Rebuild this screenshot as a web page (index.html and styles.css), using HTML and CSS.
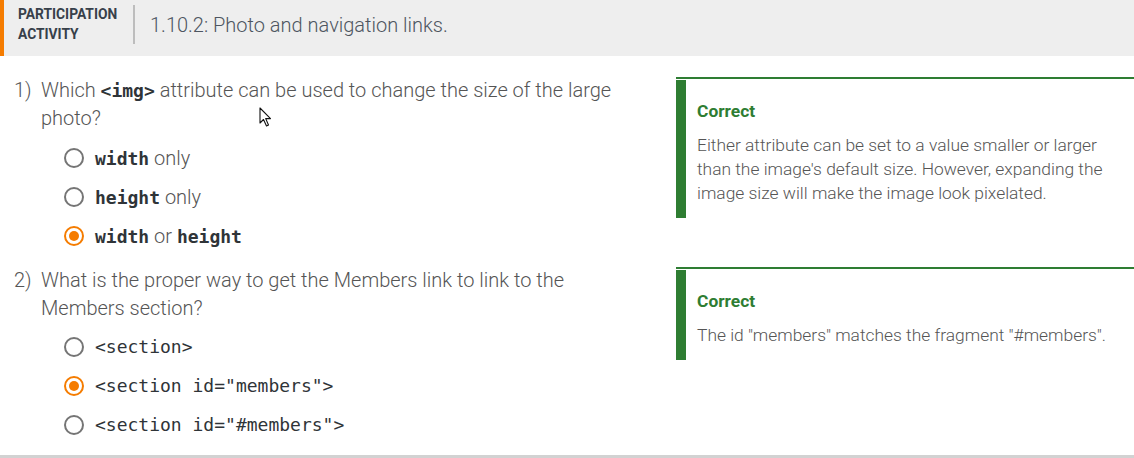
FILE: index.html
```html
<!DOCTYPE html>
<html>
<head>
<meta charset="utf-8">
<link rel="stylesheet" href="styles.css">
</head>
<body>
<div class="activity">
  <header class="head">
    <div class="label">PARTICIPATION<br>ACTIVITY</div>
    <div class="divider"></div>
    <div class="title">1.10.2: Photo and navigation links.</div>
  </header>

  <div class="qa">
    <div class="question first">
      <div class="qline">
        <span class="num">1)</span>
        <span class="qtext">Which <code class="b">&lt;img&gt;</code> attribute can be used to change the size of the large photo?</span>
      </div>
      <ul class="options">
        <li class="opt"><span class="radio"></span><span><code class="b">width</code> only</span></li>
        <li class="opt"><span class="radio"></span><span><code class="b">height</code> only</span></li>
        <li class="opt"><span class="radio on"></span><span><code class="b">width</code> or <code class="b">height</code></span></li>
      </ul>
    </div>
    <div class="feedback">
      <div class="fb-body">
        <div class="fb-title">Correct</div>
        <div class="fb-text">Either attribute can be set to a value smaller or larger than the image's default size. However, expanding the image size will make the image look pixelated.</div>
      </div>
    </div>

    <div class="question second">
      <div class="qline">
        <span class="num">2)</span>
        <span class="qtext">What is the proper way to get the Members link to link to the Members section?</span>
      </div>
      <ul class="options">
        <li class="opt"><span class="radio"></span><code>&lt;section&gt;</code></li>
        <li class="opt"><span class="radio on"></span><code>&lt;section id="members"&gt;</code></li>
        <li class="opt"><span class="radio"></span><code>&lt;section id="#members"&gt;</code></li>
      </ul>
    </div>
    <div class="feedback">
      <div class="fb-body">
        <div class="fb-title">Correct</div>
        <div class="fb-text">The id "members" matches the fragment "#members".</div>
      </div>
    </div>
  </div>

  <svg class="cursor" width="14" height="20" viewBox="0 0 14 20">
    <path d="M1 1 L1 16 L4.5 12.5 L7.5 19 L9.5 18 L6.7 11.6 L11.5 11.6 Z" fill="#fff" stroke="#111" stroke-width="1.1" stroke-linejoin="round"/>
  </svg>
</div>
</body>
</html>
```

FILE: styles.css
```css
* { box-sizing: border-box; }
html, body { margin: 0; padding: 0; background: #fff; }
body {
  font-family: Roboto, "Liberation Sans", sans-serif;
  color: #5a5a5a;
  width: 1134px;
  height: 458px;
  overflow: hidden;
}
.activity {
  position: relative;
  height: 458px;
  border-bottom: 3px solid #d2d2d2;
}
.head {
  display: flex;
  align-items: flex-start;
  height: 56px;
  background: #eeeeee;
  border-left: 4px solid #f57c00;
  padding-left: 14px;
}
.label {
  font-size: 13.8px;
  font-weight: 700;
  line-height: 20px;
  color: #37404a;
  padding-top: 4px;
  width: 115px;
}
.divider {
  width: 2px;
  height: 39px;
  background: #bdbdbd;
  margin-top: 5px;
}
.title {
  font-size: 20px;
  font-weight: 300;
  color: #4d5560;
  margin-left: 15px;
  line-height: 24px;
  padding-top: 13px;
}
.qa {
  display: grid;
  grid-template-columns: 676px 458px;
  padding-top: 20px;
}
.question {
  padding-left: 14px;
}
.question.first { padding-bottom: 11px; }
.question.first .options { margin-top: 6px; }
.question.second .options { margin-top: 5px; }
.qline {
  display: flex;
  font-size: 20px;
  font-weight: 300;
  line-height: 28px;
  color: #555;
}
.num { width: 27px; flex: none; }
.qtext { width: 590px; }
code {
  font-family: "DejaVu Sans Mono", "Liberation Mono", monospace;
  font-size: 18px;
  line-height: 1;
  color: #2f3438;
  font-weight: 400;
}
code.b { font-weight: 700; }
.options {
  list-style: none;
  margin: 6px 0 0;
  padding: 0 0 0 50px;
}
.opt {
  display: flex;
  align-items: center;
  height: 39px;
  font-size: 20px;
  font-weight: 300;
  color: #555;
}
.radio {
  width: 20px;
  height: 20px;
  border: 2px solid #757575;
  border-radius: 50%;
  margin-right: 11px;
  flex: none;
  display: flex;
  align-items: center;
  justify-content: center;
}
.radio.on { border-color: #f57c00; }
.radio.on::after {
  content: "";
  width: 10px;
  height: 10px;
  border-radius: 50%;
  background: #f57c00;
}
.feedback {
  border-top: 2px solid #2e7d32;
  padding-top: 1px;
  margin-top: 1px;
  align-self: start;
}
.fb-body {
  border-left: 10px solid #2e7d32;
  padding: 19px 20px 13px 11px;
}
.fb-title {
  font-size: 17.4px;
  font-weight: 700;
  color: #2e7d32;
  line-height: 24px;
  margin-bottom: 10px;
}
.fb-text {
  font-size: 17.4px;
  font-weight: 300;
  line-height: 24px;
  color: #555;
}
.cursor {
  position: absolute;
  left: 259px;
  top: 107px;
}
```
